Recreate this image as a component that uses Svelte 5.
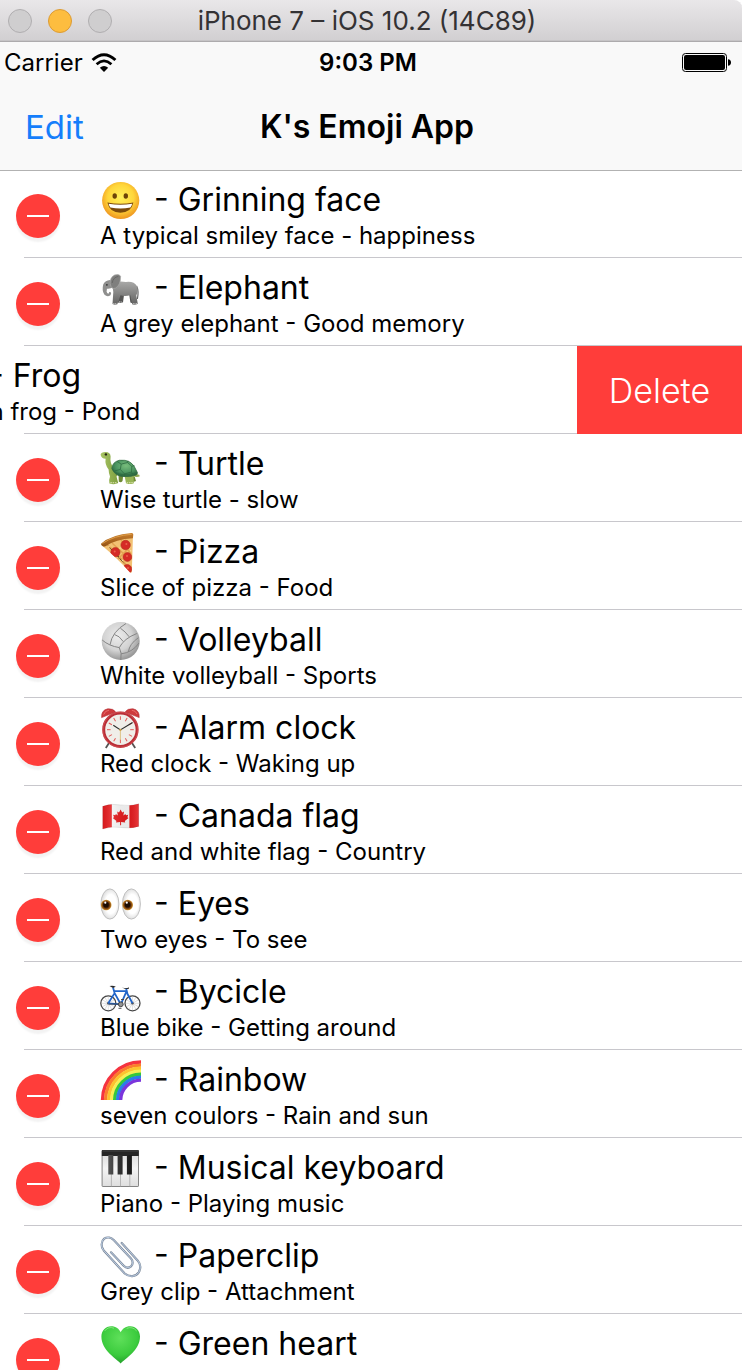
<script>
  const items = [
    { icon: 'grin', name: 'Grinning face', note: 'A typical smiley face - happiness' },
    { icon: 'elephant', name: 'Elephant', note: 'A grey elephant - Good memory' },
    { icon: 'frog', name: 'Frog', note: 'Green frog - Pond', swiped: true },
    { icon: 'turtle', name: 'Turtle', note: 'Wise turtle - slow' },
    { icon: 'pizza', name: 'Pizza', note: 'Slice of pizza - Food' },
    { icon: 'volleyball', name: 'Volleyball', note: 'White volleyball - Sports' },
    { icon: 'clock', name: 'Alarm clock', note: 'Red clock - Waking up' },
    { icon: 'flag', name: 'Canada flag', note: 'Red and white flag - Country' },
    { icon: 'eyes', name: 'Eyes', note: 'Two eyes - To see' },
    { icon: 'bike', name: 'Bycicle', note: 'Blue bike - Getting around' },
    { icon: 'rainbow', name: 'Rainbow', note: 'seven coulors - Rain and sun' },
    { icon: 'piano', name: 'Musical keyboard', note: 'Piano - Playing music' },
    { icon: 'clip', name: 'Paperclip', note: 'Grey clip - Attachment' },
    { icon: 'heart', name: 'Green heart', note: '' }
  ];
  const ticks = [0, 30, 60, 90, 120, 150, 180, 210, 240, 270, 300, 330];
  const spokes = [0, 30, 60, 90, 120, 150];
  const bands = [
    [38.5, '#f5333f'], [35.4, '#fb7d2c'], [32.3, '#fdc32f'], [29.2, '#f6ee55'],
    [26.3, '#35c83c'], [23.4, '#2b7de9'], [20.4, '#7a35dc']
  ];
</script>

{#snippet emoji(kind)}
  <svg class="emoji" viewBox="0 0 42 42" aria-hidden="true">
    {#if kind === 'grin'}
      <defs>
        <radialGradient id="face" cx=".5" cy=".42" r=".58"><stop offset="0" stop-color="#fff05a" /><stop offset=".6" stop-color="#ffd63a" /><stop offset="1" stop-color="#ee9420" /></radialGradient>
      </defs>
      <circle cx="20.7" cy="20.5" r="18.6" fill="url(#face)" />
      <ellipse cx="14.7" cy="16" rx="2.2" ry="2.8" fill="#6d4307" />
      <ellipse cx="25.8" cy="16" rx="2.2" ry="2.8" fill="#6d4307" />
      <path d="M7.4 22.6Q20.4 25 33.4 22.6Q31.2 32.8 20.4 32.8Q9.6 32.8 7.4 22.6Z" fill="#7b4a0c" />
      <path d="M8.6 23.8Q20.4 25.8 32.2 23.8Q31.6 26.2 30.4 27.6Q20.4 29.4 10.4 27.6Q9.2 26.2 8.6 23.8Z" fill="#fff" />
    {:else if kind === 'elephant'}
      <defs><linearGradient id="hide" x2="0" y2="1"><stop offset="0" stop-color="#a9a9a8" /><stop offset=".5" stop-color="#858584" /><stop offset="1" stop-color="#616160" /></linearGradient></defs>
      <path d="M36.6 18Q39 23 37.4 31" fill="none" stroke="#666" stroke-width="1.2" />
      <path d="M18.5 23L18 34.4Q20.5 35.6 23 34.2L24 27ZM29 25L30.4 34.4Q33 35.5 34.5 34.4L34 25Z" fill="#555554" />
      <path d="M12 15Q19 12.4 26 14Q34 13 37 18.2Q38.6 23 36.3 27.5L37.8 35.8Q35 37.6 32.2 36.3L30.3 27.2Q25 28.8 20.5 27.3L17.3 36.3Q14.6 37.4 12.5 36L13.3 24Z" fill="url(#hide)" />
      <path d="M10 12Q5.2 12.5 3.3 16.2Q1.6 22.5 4.3 26.6Q7.4 29.7 10.4 27.3Q12 25.4 10.3 23.5Q8.7 23.8 9 25.2Q7.7 26.4 6.6 23.7Q6.5 21.5 7.7 20.6Q11.6 20.9 14 18.5Q15.5 14 10 12Z" fill="#8f8f8e" />
      <path d="M10.2 15.8Q9.7 9.5 14.5 7.1Q19.3 5.5 20.6 8.4Q20.6 17.4 15.4 20.2Q11.3 21.8 10.2 15.8Z" fill="#7f7f7e" stroke="#a9a9a8" stroke-width=".7" />
      <path d="M12.2 15Q13 9.4 18.3 8.4" fill="none" stroke="#686867" stroke-width="1" />
      <path d="M6.6 21.4Q9.2 25.2 12.4 23.3Q9.6 23.3 8.1 20.9Z" fill="#fff" />
      <circle cx="6.9" cy="16.9" r=".8" fill="#262626" />
      <path d="M13.2 35.8h3.5M19 34h3M32.8 35.8h4.3" stroke="#ddd" stroke-width="1" stroke-dasharray="1.1 .5" />
    {:else if kind === 'frog'}
      <circle cx="11" cy="9" r="7" fill="#68b938" /><circle cx="30" cy="9" r="7" fill="#68b938" />
      <ellipse cx="20.5" cy="23" rx="18" ry="15" fill="#68b938" />
      <circle cx="11" cy="9" r="4" fill="#fff" /><circle cx="30" cy="9" r="4" fill="#fff" />
      <circle cx="11" cy="9" r="2" /><circle cx="30" cy="9" r="2" />
      <path d="M6 24Q20 34 35 24" fill="none" stroke="#2d6519" stroke-width="1.5" />
    {:else if kind === 'turtle'}
      <defs>
        <radialGradient id="shell" cx=".55" cy=".35" r=".65"><stop offset="0" stop-color="#78bd7c" /><stop offset=".6" stop-color="#4d9661" /><stop offset="1" stop-color="#27613c" /></radialGradient>
        <linearGradient id="neck"><stop offset="0" stop-color="#a9c565" /><stop offset="1" stop-color="#7f9f3f" /></linearGradient>
      </defs>
      <path d="M34 29Q38 29.8 40.2 32Q37 33.7 33.4 32.2Z" fill="#91a851" />
      <path d="M18.5 31L18.8 37.8Q22 39 22.6 36.8L23.2 31ZM30 30L34.8 33L36 37Q33 38.6 31 36.6Z" fill="#6f8a35" />
      <path d="M.6 10.7Q1 7.9 5.4 7.9Q10.4 7.8 10.6 12.4Q9.7 18.9 13.5 23.4Q13.5 29.6 17.8 30.6L16.5 32.5L18.2 39Q14.5 41.1 9.4 39.4Q8.8 35.6 10 32.6Q8.7 29 8.6 25.4Q4.7 20.7 5.6 14.7Q1.4 14.7.6 10.7Z" fill="url(#neck)" />
      <path d="M24.6 32L26 39.2Q30.4 40.9 33.8 39.2L33.5 31Z" fill="#98b556" />
      <path d="M11.8 24.4Q12.4 18.1 19.2 16.3Q32 14.6 36.6 27Q38.5 29.2 36.3 31Q30 33.4 21.5 32.4Q14.5 31.1 11.8 24.4Z" fill="url(#shell)" stroke="#356e43" stroke-width=".8" />
      <path d="M12.5 25Q15 30 22 30.5T36.7 28.7M17 17.4L21.2 20.1L20.3 25.5L24.5 29.9L31.5 28L31.8 22.3L27.5 18.5L21.2 20.1M27.5 18.5L28 16.6M31.8 22.3L34.4 21.5M20.3 25.5L14.5 26.9M24.5 29.9V32M31.5 28L33 30.5" fill="none" stroke="#2f6c41" stroke-width=".8" />
      <circle cx="5.9" cy="10.4" r="1.2" fill="#272715" />
      <path d="M10.4 38.8h6.7M26.7 38.8h6.2" stroke="#e4e6bb" stroke-width="1.1" stroke-dasharray="1.5 .8" />
    {:else if kind === 'pizza'}
      <defs>
        <clipPath id="slice"><path d="M3 13Q15 5.3 33 3L31.8 40.3Q30.9 40.9 29.6 40Q18.5 27.5 2 13.5Z" /></clipPath>
        <linearGradient id="crust" x2="0" y2="1"><stop offset="0" stop-color="#c97f2d" /><stop offset="1" stop-color="#955315" /></linearGradient>
      </defs>
      <g clip-path="url(#slice)">
        <path d="M0 0h42v42H0z" fill="#f2c173" />
        <path d="M6 12L16 20L30 38M12 11L25 23M21 8L31 22M18 27L27 18" stroke="#e3a351" stroke-width="1.5" />
        <g fill="#d52b26" stroke="#b52b1b" stroke-width=".6">
          <circle cx="15.4" cy="20.2" r="4.6" /><circle cx="25.6" cy="13" r="4.7" /><circle cx="27.4" cy="25" r="4.4" /><circle cx="27.2" cy="37.2" r="4.6" />
        </g>
        <g fill="#ea624b"><circle cx="14.7" cy="19.5" r="1" /><circle cx="26.4" cy="12" r="1" /><circle cx="27" cy="24" r="1" /><circle cx="28" cy="36" r="1" /></g>
        <path d="M8.4 14.6h1M19.5 16.1h1M22.2 28.4h1M30.4 18.7h.8" stroke="#ffebb1" stroke-width="1.4" />
      </g>
      <path d="M1 11.7Q11.7 2.6 31.6 1.1Q33.3 1 33.3 2.6L32.9 6.3Q16 7 5 14.5Q1.1 14.5 1 11.7Z" fill="url(#crust)" />
      <path d="M2.4 11.4Q14 3.6 31.8 2.2" fill="none" stroke="#e0a24d" stroke-width=".9" />
    {:else if kind === 'volleyball'}
      <defs><radialGradient id="ball" cx=".42" cy=".38" r=".62"><stop offset="0" stop-color="#ececec" /><stop offset=".6" stop-color="#d3d3d3" /><stop offset="1" stop-color="#989898" /></radialGradient></defs>
      <circle cx="20.7" cy="21" r="19" fill="url(#ball)" />
      <path d="M19.3 27.6Q9 26 2.2 20M19.3 27.6Q22.2 33 20.8 39.8M19.3 27.6Q24 18.5 36.8 13.5M10 24.8Q12.2 11.5 26 3.5M23.3 21.6Q19.2 15.5 14.6 14.6M29.2 16.8Q25.5 11.6 20.4 8.2M20.9 33.9Q32.4 32.6 39 23M28.4 31.8Q29.4 24 38.4 17.7" fill="none" stroke="#858585" stroke-width="1" />
    {:else if kind === 'clock'}
      <path d="M9 35L5.8 40M32 35L35.2 40" stroke="#565453" stroke-width="1.8" />
      <path d="M1.6 9.6Q1 2.2 7.8.8Q13.4.4 15.6 4ZM39.2 9.6Q39.8 2.2 33 .8Q27.4.4 25.2 4Z" fill="#ce3a3d" stroke="#b42c33" stroke-width=".6" />
      <path d="M3.7 6.5Q5 2.6 9 2.2M37 6Q35.7 2.6 31.8 2.2" fill="none" stroke="#ef7774" stroke-width=".8" />
      <circle cx="20.4" cy="21.7" r="16.7" fill="#f0eee9" stroke="#b92e37" stroke-width="3" />
      <circle cx="20.4" cy="21.7" r="17.5" fill="none" stroke="#e1605f" stroke-width=".6" />
      {#each ticks as angle}
        <path d="M20.4 8.3v3.6" stroke="#e15b58" stroke-width="1" transform="rotate({angle} 20.4 21.7)" />
      {/each}
      <path d="M20.4 21.9V31.8" stroke="#d8b96d" stroke-width=".8" />
      <path d="M13.3 17.3L20.4 21.9L32.6 14.5" fill="none" stroke="#2d2d2b" stroke-width="1.2" />
      <circle cx="20.4" cy="21.9" r="1.1" fill="#d0a34b" />
    {:else if kind === 'flag'}
      <defs>
        <clipPath id="wave"><path d="M2.7 10.2Q11 7.2 20.7 8.9T38.7 7.8V30.4Q30 33.1 20.7 31.5T2.7 33Z" /></clipPath>
        <linearGradient id="shade"><stop offset="0" stop-opacity=".04" /><stop offset=".25" stop-color="#fff" stop-opacity=".12" /><stop offset=".65" stop-opacity=".05" /><stop offset=".9" stop-color="#fff" stop-opacity=".12" /><stop offset="1" stop-opacity=".15" /></linearGradient>
      </defs>
      <g clip-path="url(#wave)">
        <path d="M0 0h42v42H0z" fill="#f6f6f6" />
        <path d="M0 0h11.8v42H0zM29.4 0H42v42H29.4z" fill="#e2191c" />
        <path d="M20.6 13.4L22.2 16.5L24 15.6L23.4 19.6L25.4 17.9L26 19.2L28.2 18.8L27.4 21.3L28.5 22L24.8 25.1L25.2 26.6L21.1 26.1V29.2H20.1V26.1L16 26.6L16.4 25.1L12.8 22L14 21.3L13.1 18.8L15.3 19.2L15.9 17.9L17.8 19.6L17.2 15.6L19 16.5Z" fill="#e2191c" />
        <path d="M0 0h42v42H0z" fill="url(#shade)" />
      </g>
      <path d="M2.7 10.2Q11 7.2 20.7 8.9T38.7 7.8V30.4Q30 33.1 20.7 31.5T2.7 33Z" fill="none" stroke="#0002" stroke-width=".6" />
    {:else if kind === 'eyes'}
      <defs>
        <radialGradient id="white" cx=".55" cy=".5" r=".52"><stop offset=".6" stop-color="#fff" /><stop offset="1" stop-color="#ddd" /></radialGradient>
        <radialGradient id="iris" cx=".5" cy=".5" r=".5"><stop offset=".2" stop-color="#2c1304" /><stop offset=".55" stop-color="#4f2508" /><stop offset=".8" stop-color="#9c5d16" /><stop offset="1" stop-color="#d39a38" /></radialGradient>
      </defs>
      {#each [0, 21.5] as shift}
        <g transform="translate({shift} 0)">
          <ellipse cx="9.9" cy="20" rx="9" ry="15.1" fill="url(#white)" stroke="#bababa" stroke-width=".9" />
          <circle cx="6.2" cy="21" r="5.3" fill="url(#iris)" />
          <circle cx="6" cy="20.7" r="2.6" fill="#1c0c02" />
          <circle cx="5.3" cy="18.7" r="1.1" fill="#fff" />
        </g>
      {/each}
    {:else if kind === 'bike'}
      {#each [8.3, 32.5] as cx}
        <circle {cx} cy="31.3" r="7.5" fill="none" stroke="#454545" stroke-width="1.3" />
        {#each spokes as angle}
          <path d="M{cx - 7} 31.3h14" stroke="#b5b5b5" stroke-width=".4" transform="rotate({angle} {cx} 31.3)" />
        {/each}
        <circle {cx} cy="31.3" r="1.2" fill="#555" />
      {/each}
      <path d="M8.3 31.3L14.6 21.1L20.8 32.3L8.3 31.3M14 19.2H26.6L20.8 32.3M26.1 16.2L27.5 22L32.5 31.3M14.6 21.1L13 15.5" fill="none" stroke="#2165c9" stroke-width="1.8" stroke-linejoin="round" />
      <path d="M9.5 14.1Q13 13.2 15.8 14.7L13 16ZM21.8 15.3Q26 17.1 29 15.3L28.7 17L25 17Z" fill="#2c2c2c" />
      <path d="M9 32.1H20.5M18.5 36.3H21.5M21 27.5H24" stroke="#404040" stroke-width=".9" />
      <circle cx="20.8" cy="32.3" r="2.4" fill="#929292" stroke="#3c3c3c" stroke-width=".9" />
    {:else if kind === 'rainbow'}
      <defs><clipPath id="quarter"><path d="M0 0h41v40H0z" /></clipPath></defs>
      <g clip-path="url(#quarter)" fill="none" stroke-width="3.4">
        {#each bands as [r, color]}
          <circle cx="41" cy="40.5" {r} stroke={color} />
        {/each}
      </g>
    {:else if kind === 'piano'}
      <defs>
        <linearGradient id="keys" x2="0" y2="1"><stop offset="0" stop-color="#d8d8d8" /><stop offset=".5" stop-color="#f4f4f4" /><stop offset="1" stop-color="#dedede" /></linearGradient>
        <linearGradient id="black"><stop offset="0" stop-color="#555" /><stop offset=".4" stop-color="#333" /><stop offset="1" stop-color="#181818" /></linearGradient>
      </defs>
      <rect x="2.1" y="2.5" width="36.4" height="36" rx=".6" fill="url(#keys)" stroke="#777" stroke-width=".9" />
      <path d="M11.4 8V38.4M20.5 8V38.4M29.8 8V38.4" stroke="#aaa" stroke-width=".8" />
      <path d="M1.8 2.7Q1.8 2 2.5 2H38Q38.8 2 38.8 2.8V8H1.8Z" fill="#262626" />
      <path d="M2.5 3h35.5" stroke="#555" stroke-width=".7" />
      <path d="M8.3 7h5v19.4h-5zM17.6 7h5v19.4h-5zM26.9 7h5v19.4h-5z" fill="url(#black)" />
    {:else if kind === 'clip'}
      <g fill="none" stroke-linecap="round">
        <path d="M21.7 7L37.6 24.4C40.3 27.6 41.3 32 38.7 36.4C35.8 41 29.3 41.4 24.7 37.5L3.7 14.4C.8 11 1 5.2 4.2 2.7C7.4.4 11.4 1.7 13.7 4L31 22.6C33.2 25 33.2 28.4 31 30.4C28.8 32.2 25.8 31.8 23.7 29.7L11 16.3" stroke="#7f8b9b" stroke-width="2.2" />
        <path d="M21.7 7L37.6 24.4C40.3 27.6 41.3 32 38.7 36.4C35.8 41 29.3 41.4 24.7 37.5L3.7 14.4C.8 11 1 5.2 4.2 2.7C7.4.4 11.4 1.7 13.7 4L31 22.6C33.2 25 33.2 28.4 31 30.4C28.8 32.2 25.8 31.8 23.7 29.7L11 16.3" stroke="#c3d6ee" stroke-width=".9" />
      </g>
    {:else if kind === 'heart'}
      <defs><radialGradient id="green" cx=".48" cy=".32" r=".65"><stop offset="0" stop-color="#5fe05a" /><stop offset=".7" stop-color="#3bcb3d" /><stop offset="1" stop-color="#27a52e" /></radialGradient></defs>
      <path d="M20.7 39.6C16.5 34.5 1.4 26.8 1.4 12.5C1.4 6.5 5.5 2.2 11.2 2.2C15.8 2.2 19.2 4.7 20.7 8.3C22.2 4.7 25.6 2.2 30.2 2.2C35.9 2.2 40 6.5 40 12.5C40 26.8 24.9 34.5 20.7 39.6Z" fill="url(#green)" />
      <path d="M4.6 7Q8.5 2 14 4.2M26.6 4.4Q32.5 2 36.7 7" fill="none" stroke="#9cee91" stroke-width="1" opacity=".7" />
    {/if}
  </svg>
{/snippet}

<div class="simulator">
  <header class="titlebar">
    <div class="lights">
      <button class="light" aria-label="Close"></button>
      <button class="light amber" aria-label="Minimize"></button>
      <button class="light" aria-label="Zoom"></button>
    </div>
    <div class="window-title">iPhone 7 – iOS 10.2 (14C89)</div>
    <div></div>
  </header>

  <div class="top">
    <div class="status">
      <div class="carrier">
        <span>Carrier</span>
        <svg class="wifi" viewBox="0 0 26 20" aria-hidden="true">
          <path d="M1.6 7Q13-3.4 24.4 7" fill="none" stroke="#000" stroke-width="3" />
          <path d="M5.6 11.2Q13 4.6 20.4 11.2" fill="none" stroke="#000" stroke-width="2.8" />
          <path d="M13 19L8.8 14.8Q13 11.4 17.2 14.8Z" />
        </svg>
      </div>
      <div class="time">9:03 PM</div>
      <svg class="battery" viewBox="0 0 50 20" aria-hidden="true">
        <rect x=".5" y=".5" width="44" height="18" rx="3" fill="none" stroke="#000" />
        <rect x="2" y="2" width="41" height="15" rx="2" />
        <path d="M46 6.3Q49 6.6 49 9.5T46 12.7Z" />
      </svg>
    </div>
    <nav class="navbar">
      <button class="edit">Edit</button>
      <h1>K's Emoji App</h1>
      <div></div>
    </nav>
  </div>

  <ul class="list">
    {#each items as item}
      <li class="row" class:swiped={item.swiped}>
        <div class="content">
          <button class="remove" aria-label="Remove {item.name}"></button>
          <div class="label">
            <div class="name">{@render emoji(item.icon)}<span>- {item.name}</span></div>
            {#if item.note}<div class="note">{item.note}</div>{/if}
          </div>
        </div>
        {#if item.swiped}<button class="delete">Delete</button>{/if}
      </li>
    {/each}
  </ul>
</div>

<style>
  :global(body) { margin: 0; background: #fff; }
  button { border: 0; padding: 0; margin: 0; background: none; font: inherit; color: inherit; }
  .simulator {
    display: flex;
    flex-direction: column;
    height: 100vh;
    overflow: hidden;
    color: #000;
    font-family: Inter, "Liberation Sans", sans-serif;
  }
  .titlebar, .status, .navbar {
    display: grid;
    grid-template-columns: 1fr auto 1fr;
    align-items: center;
    box-sizing: border-box;
  }
  .titlebar {
    flex: none;
    height: 42px;
    padding: 0 16px 0 8px;
    border-bottom: 1px solid #adabad;
    border-top-right-radius: 8px;
    background: linear-gradient(#e9e7e9, #d1cfd1);
    box-shadow: inset 0 -1px #c6c4c6;
  }
  .lights { display: flex; gap: 16px; }
  .light {
    box-sizing: border-box;
    width: 24px;
    height: 24px;
    border: 1px solid #b0aeb0;
    border-radius: 50%;
    background: #cfcecf;
  }
  .amber { border-color: #dc9b34; background: #fdbd3f; }
  .window-title { color: #343234; font-size: 26px; line-height: 32px; }
  .top { flex: none; background: #f9f9f9; box-shadow: 0 1px #b2b2b2; }
  .status { height: 42px; padding: 0 10px 0 4px; font-size: 24px; line-height: 32px; }
  .carrier { display: flex; align-items: center; gap: 8px; }
  .wifi { width: 26px; height: 20px; }
  .time { font-weight: 600; }
  .battery { width: 50px; height: 20px; justify-self: end; }
  .navbar { height: 86px; padding: 0 33px 0 25px; font-size: 32px; line-height: 44px; }
  .edit { justify-self: start; color: #157efb; font-size: 33px; }
  h1 { margin: 0; font-size: inherit; font-weight: 600; }
  .list { flex: 1; min-height: 0; margin: 0; padding: 0; overflow: hidden; list-style: none; }
  .row { position: relative; display: flex; height: 88px; overflow: hidden; }
  .row::after {
    content: "";
    position: absolute;
    right: 0;
    bottom: 0;
    left: 24px;
    height: 1px;
    background: #c8c7cc;
  }
  .content {
    display: flex;
    flex: 0 0 100%;
    gap: 40px;
    box-sizing: border-box;
    padding: 8px 16px 0;
  }
  .swiped .content { margin-left: -165px; }
  .remove {
    display: flex;
    flex: none;
    align-items: center;
    justify-content: center;
    width: 44px;
    height: 44px;
    margin-top: 16px;
    border-radius: 50%;
    background: #ff3d3a;
    box-shadow: 0 4px 2px #0000000d;
  }
  .remove::before { content: ""; width: 22px; height: 2px; background: #fff; }
  .label { white-space: nowrap; }
  .name { display: flex; align-items: flex-end; gap: 12px; height: 44px; font-size: 32px; line-height: 44px; }
  .emoji { flex: none; width: 42px; height: 42px; }
  .note { font-size: 24px; line-height: 28px; }
  .delete {
    position: relative;
    z-index: 1;
    flex: none;
    width: 165px;
    background: #ff3d3a;
    color: #fff;
    font-size: 34px;
    font-weight: 350;
  }
</style>
